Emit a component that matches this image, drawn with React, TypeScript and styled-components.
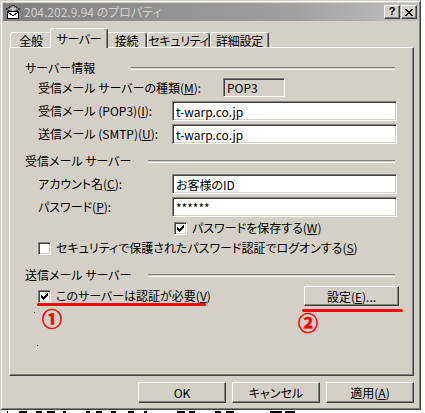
import React from 'react';
import styled, { createGlobalStyle } from 'styled-components';

const GlobalStyle = createGlobalStyle`
  html, body {
    margin: 0;
    padding: 0;
    background: #ffffff;
  }
  body {
    font-family: "Noto Sans CJK JP", "Noto Sans", sans-serif;
    font-size: 12px;
    color: #000000;
    font-feature-settings: "palt" 1;
  }
`;

const tabs = [
    { label: '全般', w: 42 },
    { label: 'サーバー', w: 54, active: true },
    { label: '接続', w: 41 },
    { label: 'セキュリティ', w: 63 },
    { label: '詳細設定', w: 59 },
];

// fragments of the window behind, peeking out under the dialog
const behindMarks = [
    { x: 7, w: 1 }, { x: 11, w: 8 }, { x: 9, w: 6 }, { x: 5, w: 8 },
    { x: 8, w: 3 }, { x: 20, w: 4 }, { x: 6, w: 6 }, { x: 9, w: 5 },
    { x: 12, w: 6 }, { x: 10, w: 3 }, { x: 30, w: 8 }, { x: 4, w: 6 },
    { x: 20, w: 6 }, { x: 5, w: 8 }, { x: 36, w: 12 }, { x: 3, w: 10 },
];

function TitleIcon() {
    return (
        <svg width="16" height="16" viewBox="0 0 16 16" shapeRendering="crispEdges">
            <path d="M1 5 L8 1 L15 5 L8 9 Z" fill="#808080" stroke="#404040" strokeWidth="1" />
            <path d="M4 5 L8 3 L12 5 L8 7 Z" fill="#c0c0c0" />
            <rect x="2.5" y="7.5" width="11" height="7" fill="#ffffff" stroke="#000000" />
            <path d="M3 8 L8 12 L13 8" fill="none" stroke="#000000" />
        </svg>
    );
}

function CheckMark() {
    return (
        <svg width="7" height="7" viewBox="0 0 7 7" shapeRendering="crispEdges">
            <path
                d="M6 0h1v1h-1z M5 1h2v1h-2z M0 2h1v1h-1z M4 2h3v1h-3z M0 3h2v1h-2z M3 3h3v1h-3z M0 4h5v1h-5z M1 5h3v1h-3z M2 6h1v1h-1z"
                fill="#000000"
            />
        </svg>
    );
}

function CloseGlyph() {
    return (
        <svg width="8" height="7" viewBox="0 0 8 7" shapeRendering="crispEdges">
            <path
                d="M0 0h2v1h-2z M6 0h2v1h-2z M1 1h2v1h-2z M5 1h2v1h-2z M2 2h4v1h-4z M3 3h2v1h-2z M2 4h4v1h-4z M1 5h2v1h-2z M5 5h2v1h-2z M0 6h2v1h-2z M6 6h2v1h-2z"
                fill="#000000"
            />
        </svg>
    );
}

function CheckBox({ checked }: { checked?: boolean }) {
    return <Box>{checked && <CheckMark />}</Box>;
}

export default function App() {
    return (
        <>
            <GlobalStyle />
            <Window>
                <TitleBar>
                    <TitleIcon />
                    <TitleText>204.202.9.94 のプロパティ</TitleText>
                    <CaptionButtons>
                        <CaptionButton>
                            <HelpMark>?</HelpMark>
                        </CaptionButton>
                        <CaptionButton>
                            <CloseGlyph />
                        </CaptionButton>
                    </CaptionButtons>
                </TitleBar>

                <Body>
                    <TabStrip>
                        {tabs.map((t) => (
                            <Tab key={t.label} $w={t.w} $active={t.active}>
                                {t.label}
                            </Tab>
                        ))}
                    </TabStrip>

                    <Panel>
                        <GroupHeader $mt={12}>
                            <GroupTitle $w={106}>サーバー情報</GroupTitle>
                            <Etched />
                        </GroupHeader>
                        <Row $mt={3} $h={19}>
                            <FieldLabel $w={185}>
                                受信メール サーバーの種類(<u>M</u>):
                            </FieldLabel>
                            <StaticBox>POP3</StaticBox>
                        </Row>
                        <Row $mt={4}>
                            <FieldLabel>
                                受信メール (POP3)(<u>I</u>):
                            </FieldLabel>
                            <Edit readOnly defaultValue="t-warp.co.jp" />
                        </Row>
                        <Row $mt={3}>
                            <FieldLabel>
                                送信メール (SMTP)(<u>U</u>):
                            </FieldLabel>
                            <Edit readOnly defaultValue="t-warp.co.jp" />
                        </Row>

                        <GroupHeader $mt={9}>
                            <GroupTitle $w={123}>受信メール サーバー</GroupTitle>
                            <Etched />
                        </GroupHeader>
                        <Row $mt={6}>
                            <FieldLabel>
                                アカウント名(<u>C</u>):
                            </FieldLabel>
                            <Edit readOnly defaultValue="お客様のID" />
                        </Row>
                        <Row $mt={3}>
                            <FieldLabel>
                                パスワード(<u>P</u>):
                            </FieldLabel>
                            <Edit readOnly defaultValue="******" />
                        </Row>
                        <CheckRow $mt={4} $indent={149}>
                            <CheckBox checked />
                            <CheckLabel>
                                パスワードを保存する(<u>W</u>)
                            </CheckLabel>
                        </CheckRow>
                        <CheckRow $mt={6} $indent={13}>
                            <CheckBox />
                            <CheckLabel>
                                セキュリティで保護されたパスワード認証でログオンする(<u>S</u>)
                            </CheckLabel>
                        </CheckRow>

                        <GroupHeader $mt={12}>
                            <GroupTitle $w={123}>送信メール サーバー</GroupTitle>
                            <Etched />
                        </GroupHeader>
                        <AuthRow>
                            <CheckBox checked />
                            <CheckLabel>
                                このサーバーは認証が必要(<u>V</u>)
                            </CheckLabel>
                            <SettingsButton>
                                設定(<u>E</u>)...
                            </SettingsButton>

                            <RedLine style={{ left: 12, top: 17, width: 169 }} />
                            <RedLine style={{ left: 277, top: 23, width: 101 }} />
                            <Marker style={{ left: 17, top: 23 }}>①</Marker>
                            <Marker style={{ left: 273, top: 27 }}>②</Marker>
                            <Speck style={{ left: 9, top: 26 }} />
                            <Speck style={{ left: 12, top: 59 }} />
                        </AuthRow>
                    </Panel>

                    <ButtonRow>
                        <DialogButton>OK</DialogButton>
                        <DialogButton>キャンセル</DialogButton>
                        <DialogButton>
                            適用(<u>A</u>)
                        </DialogButton>
                    </ButtonRow>
                </Body>
            </Window>
            <BehindStrip>
                {behindMarks.map((m, i) => (
                    <BehindMark key={i} $gap={m.x} $w={m.w} />
                ))}
            </BehindStrip>
        </>
    );
}

const Window = styled.div`
    width: 421px;
    height: 410px;
    box-sizing: border-box;
    background: #d4d0c8;
    border: 1px solid;
    border-color: #d4d0c8 #404040 #404040 #d4d0c8;
    box-shadow: inset 1px 1px #ffffff, inset -1px -1px #808080;
    padding: 2px;
    display: flex;
    flex-direction: column;
`;

const TitleBar = styled.div`
    height: 18px;
    flex-shrink: 0;
    display: flex;
    align-items: center;
    padding: 0 1px 0 2px;
    background: linear-gradient(90deg, #808080 0%, #a0a0a0 70%, #c0c0c0 100%);
`;

const TitleText = styled.span`
    margin-left: 3px;
    color: #d4d0c8;
    font-size: 12px;
    line-height: 18px;
    white-space: nowrap;
`;

const CaptionButtons = styled.div`
    margin-left: auto;
    display: flex;
    gap: 1px;
`;

const CaptionButton = styled.div`
    width: 16px;
    height: 14px;
    box-sizing: border-box;
    display: flex;
    align-items: center;
    justify-content: center;
    background: #d4d0c8;
    border: 1px solid;
    border-color: #ffffff #404040 #404040 #ffffff;
    box-shadow: inset -1px -1px #808080;
`;

const HelpMark = styled.span`
    font-family: "Liberation Sans", Arial, sans-serif;
    font-weight: 700;
    font-size: 11px;
    line-height: 11px;
    margin-top: -1px;
`;

const Body = styled.div`
    flex: 1;
    display: flex;
    flex-direction: column;
    padding: 7px 4px 0 6px;
`;

const TabStrip = styled.div`
    height: 20px;
    display: flex;
    align-items: flex-end;
    padding-left: 1px;
    margin-bottom: -1px;
    position: relative;
    z-index: 1;
`;

const Tab = styled.div<{ $w: number; $active?: boolean }>`
    box-sizing: border-box;
    width: ${(p) => (p.$active ? p.$w + 4 : p.$w)}px;
    height: ${(p) => (p.$active ? 20 : 15)}px;
    margin: ${(p) => (p.$active ? '0 -2px 0 -2px' : '0 0 1px 0')};
    position: relative;
    z-index: ${(p) => (p.$active ? 2 : 1)};
    display: flex;
    align-items: center;
    justify-content: center;
    padding-top: ${(p) => (p.$active ? 0 : 1)}px;
    background: #d4d0c8;
    border-top: 1px solid #ffffff;
    border-left: 1px solid #ffffff;
    border-right: 1px solid #404040;
    border-radius: 3px 3px 0 0;
    box-shadow: inset -1px 0 #808080;
    white-space: nowrap;
    line-height: 13px;
    letter-spacing: -0.3px;
`;

const Panel = styled.div`
    height: 329px;
    flex-shrink: 0;
    box-sizing: border-box;
    display: flex;
    flex-direction: column;
    padding: 0 16px 0 15px;
    border: 1px solid;
    border-color: #ffffff #404040 #404040 #ffffff;
    box-shadow: inset -1px -1px #808080;
`;

const GroupHeader = styled.div<{ $mt: number }>`
    height: 15px;
    margin-top: ${(p) => p.$mt}px;
    display: flex;
    align-items: center;
    margin-right: 2px;
`;

const GroupTitle = styled.span<{ $w: number }>`
    width: ${(p) => p.$w}px;
    flex-shrink: 0;
    white-space: nowrap;
    line-height: 15px;
`;

const Etched = styled.div`
    flex: 1;
    height: 1px;
    border-top: 1px solid #808080;
    border-bottom: 1px solid #ffffff;
    margin-top: 1px;
`;

const Row = styled.div<{ $mt: number; $h?: number }>`
    height: ${(p) => p.$h ?? 20}px;
    margin-top: ${(p) => p.$mt}px;
    display: flex;
    align-items: center;
    padding-left: 13px;
`;

const FieldLabel = styled.span<{ $w?: number }>`
    width: ${(p) => p.$w ?? 134}px;
    flex-shrink: 0;
    white-space: nowrap;
    line-height: 14px;
`;

const sunken = `
    box-sizing: border-box;
    border: 1px solid;
    border-color: #808080 #ffffff #ffffff #808080;
    box-shadow: inset 1px 1px #404040, inset -1px -1px #d4d0c8;
`;

const StaticBox = styled.div`
    ${sunken}
    width: 62px;
    height: 19px;
    padding: 0 3px;
    display: flex;
    align-items: center;
    background: #d4d0c8;
`;

const Edit = styled.input`
    ${sunken}
    flex: 1;
    min-width: 0;
    height: 20px;
    margin: 0;
    padding: 0 3px;
    outline: none;
    background: #ffffff;
    font: inherit;
    font-size: 12px;
    color: #000000;
`;

const CheckRow = styled.div<{ $mt: number; $indent: number }>`
    height: 14px;
    margin-top: ${(p) => p.$mt}px;
    padding-left: ${(p) => p.$indent}px;
    display: flex;
    align-items: center;
`;

const Box = styled.div`
    ${sunken}
    width: 13px;
    height: 13px;
    flex-shrink: 0;
    background: #ffffff;
    display: flex;
    align-items: center;
    justify-content: center;
`;

const CheckLabel = styled.span`
    margin-left: 5px;
    white-space: nowrap;
    line-height: 14px;
`;

const AuthRow = styled.div`
    position: relative;
    height: 20px;
    margin-top: 4px;
    display: flex;
    align-items: center;
    padding-left: 13px;
`;

const raised = `
    box-sizing: border-box;
    background: #d4d0c8;
    border: 1px solid;
    border-color: #ffffff #404040 #404040 #ffffff;
    box-shadow: inset -1px -1px #808080;
    font: inherit;
    font-size: 12px;
    color: #000000;
    padding: 0;
    display: flex;
    align-items: center;
    justify-content: center;
`;

const SettingsButton = styled.button`
    ${raised}
    margin-left: auto;
    margin-right: -2px;
    width: 95px;
    height: 20px;
`;

const RedLine = styled.div`
    position: absolute;
    height: 3px;
    border-radius: 2px;
    background: #ff0000;
`;

const Marker = styled.span`
    position: absolute;
    color: #ff0000;
    font-size: 20px;
    font-weight: 700;
    line-height: 20px;
    -webkit-text-stroke: 0.6px #ff0000;
`;

const Speck = styled.div`
    position: absolute;
    width: 1px;
    height: 1px;
    background: #404040;
`;

const ButtonRow = styled.div`
    margin-top: 6px;
    display: flex;
    justify-content: flex-end;
    gap: 6px;
`;

const DialogButton = styled.button`
    ${raised}
    width: 88px;
    height: 21px;
`;

const BehindStrip = styled.div`
    height: 3px;
    width: 421px;
    display: flex;
    align-items: flex-end;
    overflow: hidden;
    background: #ffffff;
`;

const BehindMark = styled.div<{ $gap: number; $w: number }>`
    flex-shrink: 0;
    margin-left: ${(p) => p.$gap}px;
    width: ${(p) => p.$w}px;
    height: 2px;
    background: #000000;
`;
